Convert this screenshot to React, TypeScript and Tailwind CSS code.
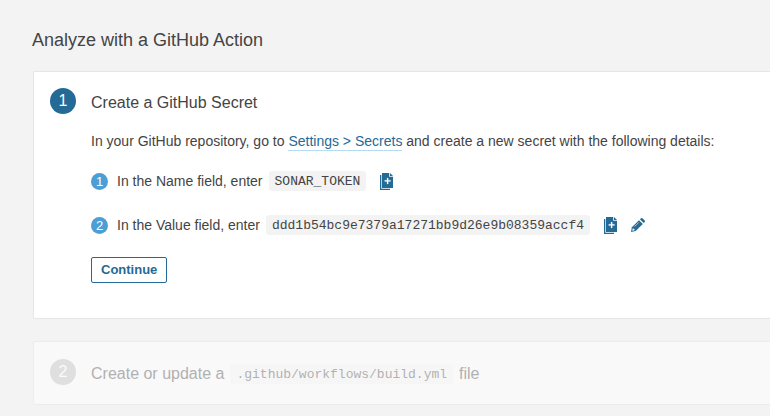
import type { ReactNode } from 'react';

function CopyIcon() {
  return (
    <svg viewBox="0 0 13 17" className="h-[17px] w-[13px]" aria-hidden="true">
      <path d="M0 2h1.3v13.7H10V17H0z" fill="#236a97" />
      <path d="M2 0h7.2v3.8H13V15H2z" fill="#236a97" />
      <path d="M10 0l3 3h-3z" fill="#236a97" />
      <path d="M7 5h1.2v2.2h2.3v1.4H8.2V11H7V8.600H4.700V7.200H7z" fill="#fff" stroke="#fff" strokeWidth=".2" />
    </svg>
  );
}

function PencilIcon() {
  return (
    <svg viewBox="0 0 14 14" className="size-[14px]" aria-hidden="true">
      <path d="M0 14l.9-4.700L8 2.200 11.800 6l-7.100 7.100z" fill="#236a97" />
      <path d="M8.900 1.300l.8-.8q1-.9 2 0l1.800 1.800q.9 1 0 2l-.8.8z" fill="#236a97" />
      <path d="M1.700 10.400l-.5 2.400 2.400-.5v-1H2.700v-.9z" fill="#fff" />
      <path d="M3.600 8.600l4.200-4.200" stroke="#fff" strokeWidth=".6" />
    </svg>
  );
}

function Code({ children }: { children: ReactNode }) {
  return (
    <code className="rounded-[3px] bg-[#f3f3f3] px-1.5 pt-1 pb-0.5 font-['Liberation_Mono',monospace] text-[13px] leading-[14px]">
      {children}
    </code>
  );
}

function StepNumber({ children, muted = false }: { children: ReactNode; muted?: boolean }) {
  return (
    <span
      className={`flex size-[26px] shrink-0 items-center justify-center rounded-full text-base text-white ${
        muted ? 'bg-[#b9b9b9]' : 'bg-[#236a97]'
      }`}
    >
      {children}
    </span>
  );
}

function Bullet({ children }: { children: ReactNode }) {
  return (
    <span className="mr-[9px] flex size-[17px] shrink-0 items-center justify-center rounded-full bg-[#4b9fd5] text-[13px] leading-none text-white">
      {children}
    </span>
  );
}

export default function App() {
  return (
    <main className="min-h-screen bg-[#f3f3f3] pt-7 pb-[11px] pl-8 font-['Liberation_Sans',Arial,sans-serif] text-sm text-[#444]">
      <h1 className="mb-[19px] text-lg leading-6">Analyze with a GitHub Action</h1>

      <section className="ml-px flex gap-[15px] rounded-l-xs border border-r-0 border-[#e6e6e6] bg-white px-4 pt-4 pb-[35px]">
        <StepNumber>1</StepNumber>
        <div className="min-w-0">
          <h2 className="mt-[3px] text-base leading-6">Create a GitHub Secret</h2>
          <p className="mt-4 leading-5 whitespace-nowrap">
            In your GitHub repository, go to{' '}
            <a href="#secrets" className="border-b border-[#b5dbf0] pb-px text-[#236a97]">
              Settings &gt; Secrets
            </a>{' '}
            and create a new secret with the following details:
          </p>
          <ol className="mt-5 flex flex-col gap-6 whitespace-nowrap">
            <li className="flex h-5 items-center">
              <Bullet>1</Bullet>
              <span className="mr-1.5">In the Name field, enter</span>
              <Code>SONAR_TOKEN</Code>
              <button type="button" aria-label="Copy name" className="ml-3.5">
                <CopyIcon />
              </button>
            </li>
            <li className="flex h-5 items-center">
              <Bullet>2</Bullet>
              <span className="mr-1.5">In the Value field, enter</span>
              <Code>ddd1b54bc9e7379a17271bb9d26e9b08359accf4</Code>
              <button type="button" aria-label="Copy value" className="ml-3.5">
                <CopyIcon />
              </button>
              <button type="button" aria-label="Edit value" className="ml-3.5">
                <PencilIcon />
              </button>
            </li>
          </ol>
          <button
            type="button"
            className="mt-[22px] h-[26px] rounded-xs border border-[#236a97] bg-white px-[9px] text-[13px] font-bold text-[#236a97]"
          >
            Continue
          </button>
        </div>
      </section>

      <section className="mt-[22px] ml-px rounded-l-xs border border-r-0 border-[#ececec] bg-[#f9f9f9] px-4 pt-[17px] pb-[18px]">
        <div className="flex gap-[15px] opacity-40">
          <StepNumber muted>2</StepNumber>
          <h2 className="mt-[3px] flex items-center gap-1.5 text-base leading-6 whitespace-nowrap">
            Create or update a <Code>.github/workflows/build.yml</Code> file
          </h2>
        </div>
      </section>
    </main>
  );
}
